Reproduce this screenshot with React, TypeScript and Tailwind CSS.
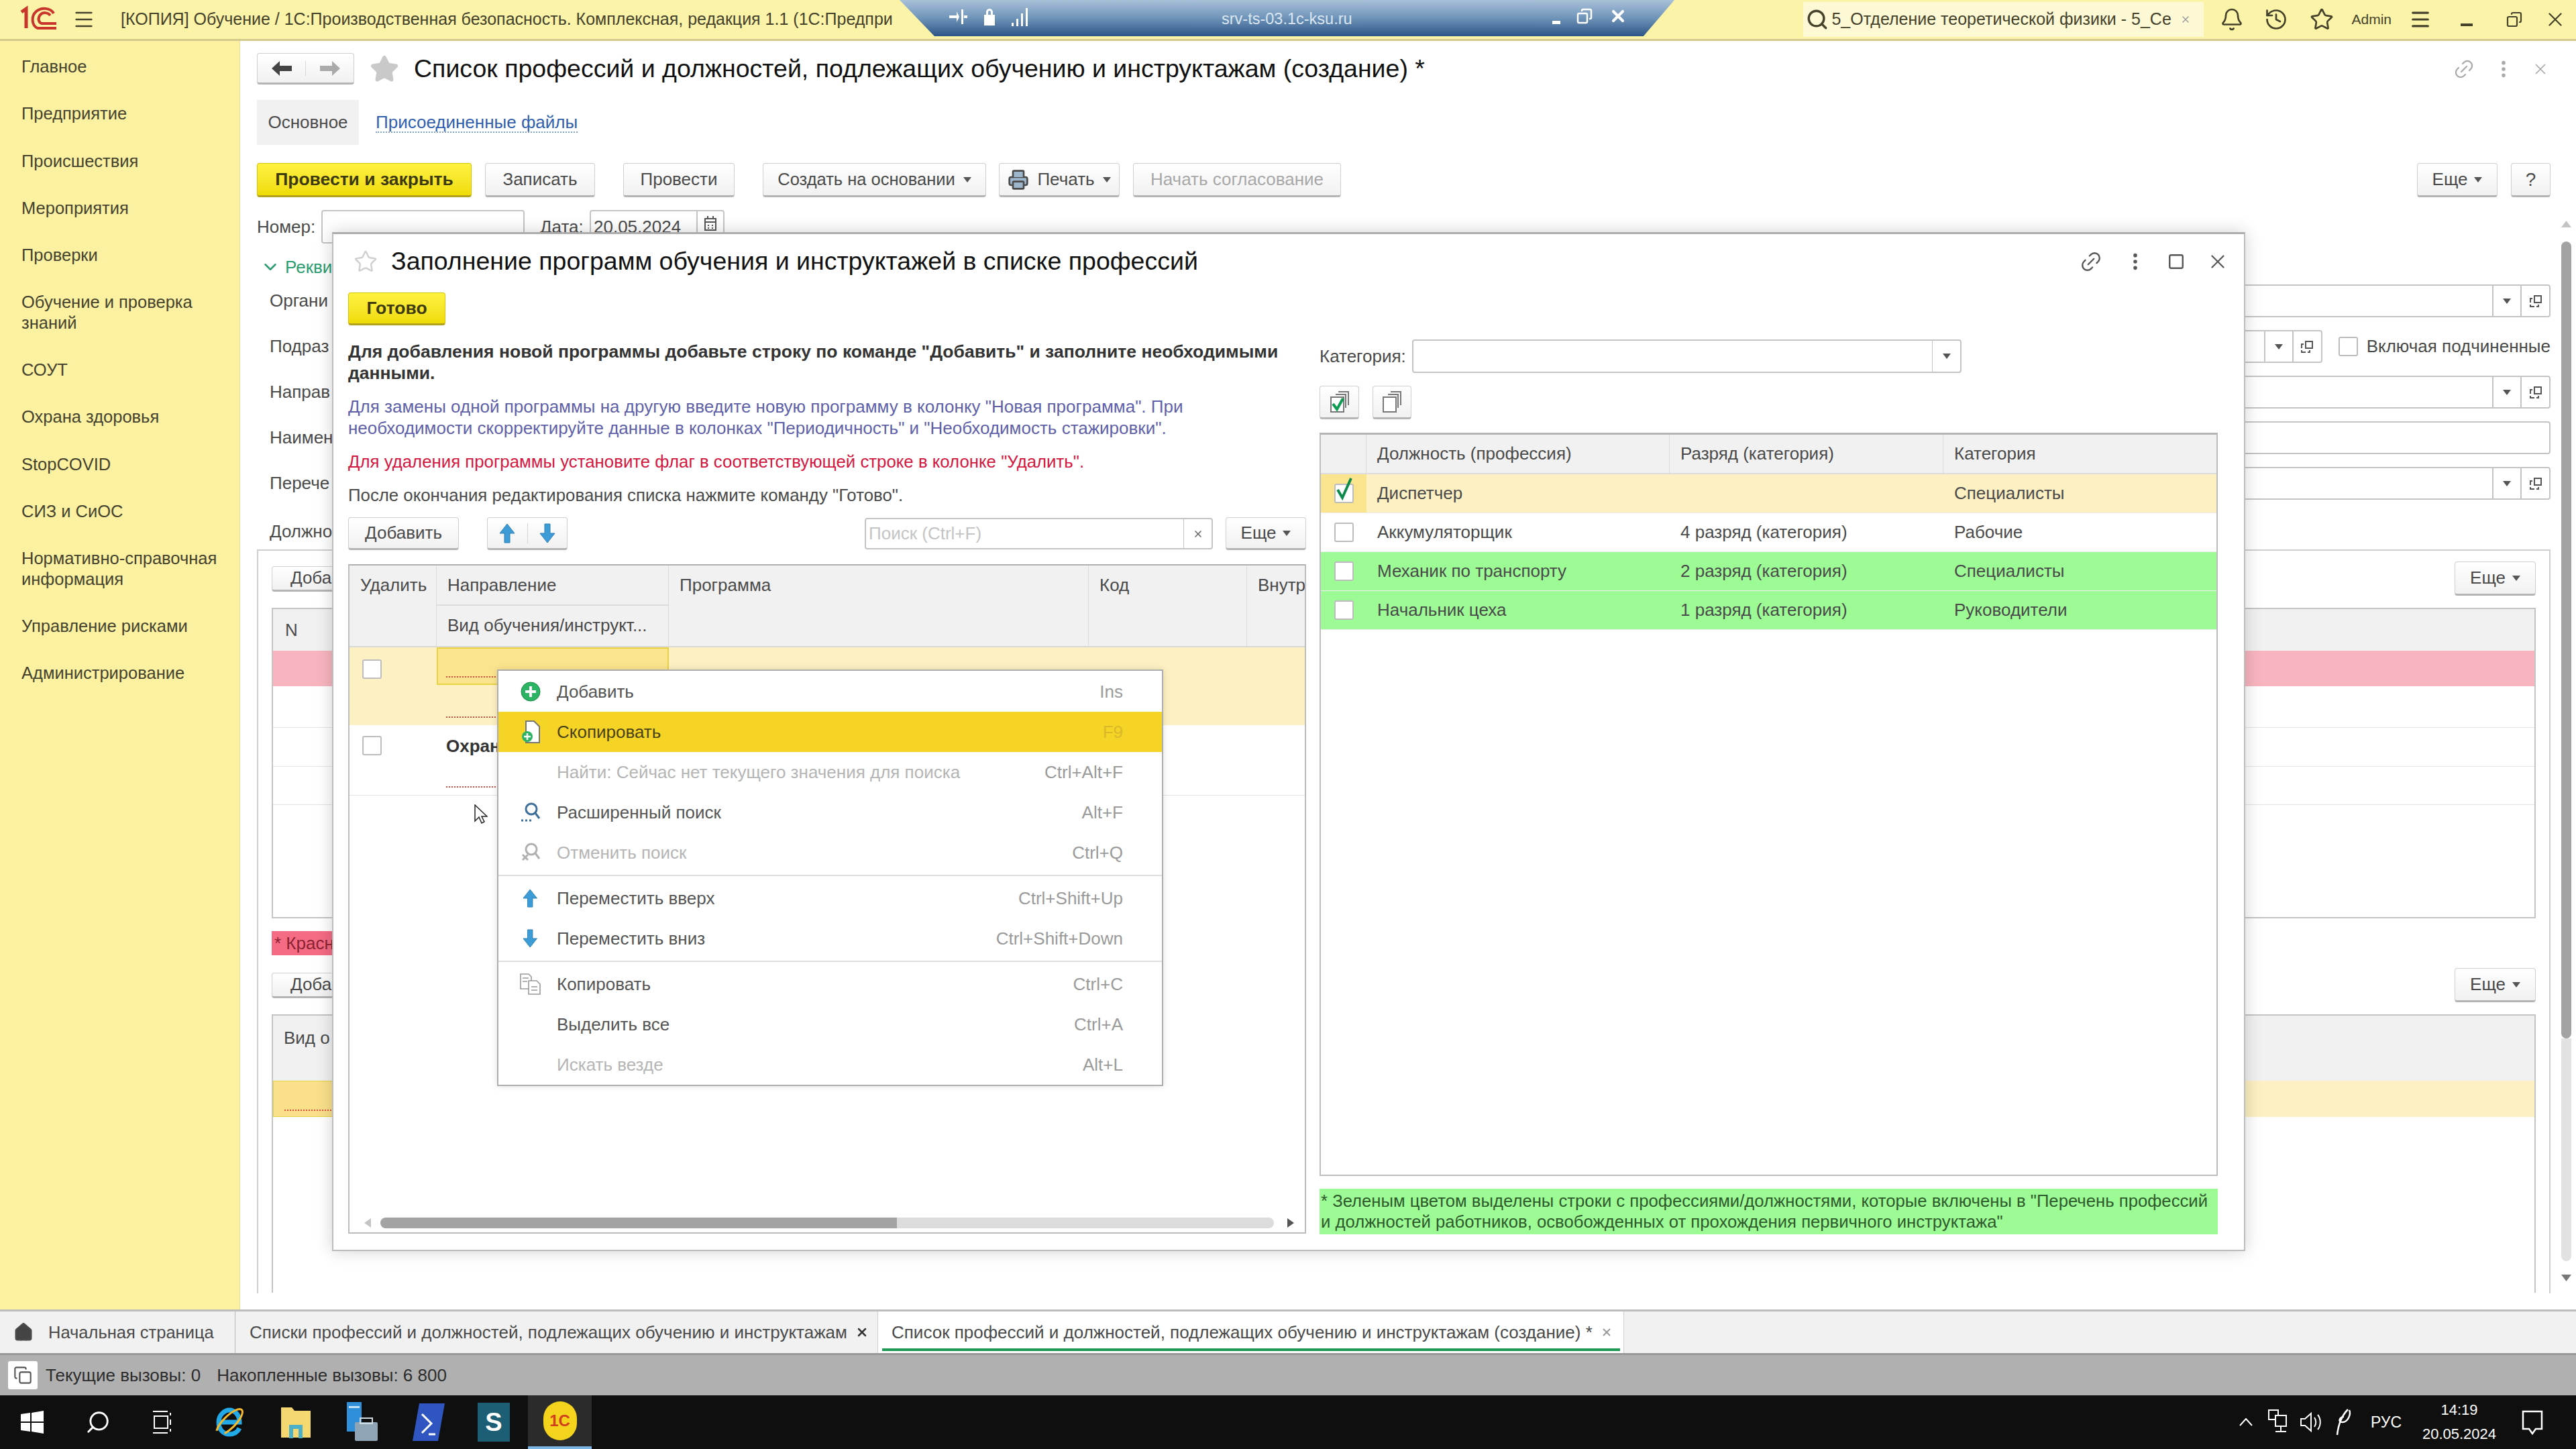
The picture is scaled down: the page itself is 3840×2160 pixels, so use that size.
import { Bell, ChevronDown, Copy, History, Home, Link2, Menu, MoreVertical, Printer, Search, Square, Star, X } from "lucide-react";

const btn =
  "flex items-center justify-center rounded-[4px] border border-[#cfcfcf] border-b-[3px] border-b-[#b5b5b5] bg-gradient-to-b from-white to-[#f1f1f1] text-[#4a4a4a]";
const yellowBtn =
  "flex items-center justify-center rounded-[4px] border border-[#d9c400] border-b-[3px] border-b-[#b3a21e] bg-gradient-to-b from-[#fff33f] to-[#f0db00] text-[26.5px] font-bold text-[#3d3a10]";
const inputBox = "flex rounded-[4px] border-2 border-[#c4c4c4] bg-white";
// labels of the back form stop where the dialog starts (x=495), the picture only shows that much of them
const shownLabel = "w-[93px] shrink-0 whitespace-nowrap";

const Caret = ({ className = "fill-[#555]" }: { className?: string }) => (
  <svg width="12" height="8" viewBox="0 0 12 8" className={className}>
    <polygon points="0,0 12,0 6,8" />
  </svg>
);

const OpenIcon = () => (
  <svg width="20" height="20" viewBox="0 0 20 20" fill="none" stroke="#555" strokeWidth="2">
    <rect x="8" y="2" width="10" height="10" />
    <path d="M5 6H2v12h12v-3" strokeDasharray="9 3" />
  </svg>
);

const Arrow = ({ down = false, size = 30 }: { down?: boolean; size?: number }) => (
  <svg width={size * 0.8} height={size} viewBox="0 0 24 30" className={down ? "rotate-180" : ""}>
    <polygon points="12,1 23,15 16,15 16,29 8,29 8,15 1,15" fill="#3d9bd6" stroke="#2b7fb5" strokeWidth="1" />
  </svg>
);

const Checkbox = ({ checked = false, className = "" }: { checked?: boolean; className?: string }) => (
  <div className={`relative h-[29px] w-[29px] rounded-[3px] border-2 border-[#bdbdbd] bg-white ${className}`}>
    {checked && (
      <svg width="30" height="38" viewBox="0 0 30 38" className="absolute left-[-2px] top-[-13px]">
        <path d="M5 20 L12 32 L25 3" fill="none" stroke="#0b8a4c" strokeWidth="4" />
      </svg>
    )}
  </div>
);

function Logo() {
  return (
    <svg width="58" height="42" viewBox="0 0 58 42" fill="none" stroke="#c9352c">
      <path d="M4 10 L11 5 V34" strokeWidth="5" />
      <path d="M52 12 C48 4 34 2 26 9 C18 16 19 30 28 34 H56" strokeWidth="4" />
      <path d="M47 15 C43 10 36 10 32 14 C28 19 29 25 34 27 H56" strokeWidth="4" />
    </svg>
  );
}

function TopBar() {
  return (
    <header className="flex h-[61px] shrink-0 items-center border-b-[3px] border-b-[#d3c98a] bg-[#fbf3a8] text-[#45422c]">
      <div className="ml-[28px] w-[58px]">
        <Logo />
      </div>
      <Menu className="ml-[22px] h-[34px] w-[34px]" strokeWidth={1.8} />
      <div className="ml-[38px] w-[1230px] whitespace-nowrap text-[25px]">
        [КОПИЯ] Обучение / 1С:Производственная безопасность. Комплексная, редакция 1.1 (1С:Предпри
      </div>
      <div className="ml-auto flex h-[52px] w-[597px] items-center bg-[#fdf9d4] pl-[4px]">
        <Search className="h-[34px] w-[34px]" strokeWidth={2.4} />
        <div className="ml-[4px] w-[506px] whitespace-nowrap text-[25px]">5_Отделение теоретической физики - 5_Се</div>
        <X className="ml-[14px] h-[16px] w-[16px] text-[#999]" strokeWidth={2} />
      </div>
      <Bell className="ml-[24px] h-[36px] w-[36px]" strokeWidth={1.8} />
      <History className="ml-[30px] h-[36px] w-[36px]" strokeWidth={1.8} />
      <Star className="ml-[32px] h-[36px] w-[36px]" strokeWidth={1.8} />
      <div className="ml-[26px] text-[21px]">Admin</div>
      <Menu className="ml-[26px] h-[34px] w-[34px]" strokeWidth={2.2} />
      <div className="ml-[43px] mt-[16px] h-[4px] w-[18px] bg-[#45422c]" />
      <Copy className="ml-[50px] h-[24px] w-[24px] -scale-x-100" strokeWidth={2.2} />
      <X className="ml-[32px] mr-[14px] h-[34px] w-[34px]" strokeWidth={1.6} />
    </header>
  );
}

function RemoteBar() {
  return (
    <div className="absolute left-[1341px] top-0 flex h-[54px] w-[1155px] items-center bg-gradient-to-b from-[#a9c0d8] via-[#6f94b9] to-[#2d5586] [clip-path:polygon(0_0,100%_0,96%_100%,4.5%_100%)]">
      <div className="absolute left-[72px] top-[10px] flex items-center gap-[22px] text-white">
        <svg width="30" height="26" viewBox="0 0 30 26" fill="white">
          <path d="M2 11h11v-6l4 8-4 8v-6H2zM20 2h3v22h-3zM24 11h5v4h-5z" />
        </svg>
        <svg width="20" height="30" viewBox="0 0 20 30" fill="white">
          <path d="M2 12h3V8a5 5 0 0 1 10 0v4h3v16H2zM8 12h4V8a2 2 0 0 0-4 0z" />
        </svg>
        <svg width="26" height="30" viewBox="0 0 26 30" fill="white">
          <path d="M1 24h3v5H1zM8 18h3v11H8zM15 10h3v19h-3zM22 2h3v27h-3z" />
        </svg>
      </div>
      <div className="absolute left-[480px] top-[11px] text-[23.5px] text-[#dbe6f1]">srv-ts-03.1c-ksu.ru</div>
      <div className="absolute left-[973px] top-[10px] flex items-center gap-[24px] text-white">
        <div className="mt-[18px] h-[5px] w-[12px] bg-white" />
        <Copy className="h-[24px] w-[24px] -scale-x-100" strokeWidth={2.5} />
        <X className="h-[28px] w-[28px]" strokeWidth={3.5} />
      </div>
    </div>
  );
}

const navItems = [
  "Главное",
  "Предприятие",
  "Происшествия",
  "Мероприятия",
  "Проверки",
  "Обучение и проверка знаний",
  "СОУТ",
  "Охрана здоровья",
  "StopCOVID",
  "СИЗ и СиОС",
  "Нормативно-справочная информация",
  "Управление рисками",
  "Администрирование",
];

function Sidebar() {
  return (
    <aside className="w-[358px] shrink-0 border-r border-r-[#e9e0a0] bg-[#fbf1a0] pt-[3px] text-[25.5px] leading-[30.3px] text-[#45432f]">
      {navItems.map((item) => (
        <div key={item} className="py-[20px] pl-[32px] pr-[20px]">
          {item}
        </div>
      ))}
    </aside>
  );
}

function SplitControls() {
  return (
    <>
      <div className="flex-1" />
      <div className="flex w-[42px] items-center justify-center border-l-2 border-l-[#c4c4c4]">
        <Caret />
      </div>
      <div className="flex w-[43px] items-center justify-center border-l-2 border-l-[#c4c4c4]">
        <OpenIcon />
      </div>
    </>
  );
}

function BackForm() {
  return (
    <div className="flex min-w-0 flex-1 flex-col overflow-hidden pl-[25px] text-[26px] text-[#4a4a4a]">
      <div className="mt-[18px] flex h-[47px] items-center">
        <div className={`${btn} h-[47px] w-[145px]`}>
          <div className="flex flex-1 justify-center text-[#444]">
            <svg width="30" height="22" viewBox="0 0 30 22" fill="currentColor">
              <polygon points="0,11 12,0 12,7 30,7 30,15 12,15 12,22" />
            </svg>
          </div>
          <div className="flex flex-1 justify-center border-l border-l-[#d8d8d8] text-[#aaa]">
            <svg width="30" height="22" viewBox="0 0 30 22" fill="currentColor">
              <polygon points="30,11 18,0 18,7 0,7 0,15 18,15 18,22" />
            </svg>
          </div>
        </div>
        <Star className="ml-[23px] h-[44px] w-[44px] fill-[#c9c9c9] text-[#c9c9c9]" />
        <h1 className="ml-[22px] whitespace-nowrap text-[37.5px] text-[#111]">
          Список профессий и должностей, подлежащих обучению и инструктажам (создание) *
        </h1>
        <div className="ml-auto mr-[2px] flex items-center gap-[26px] text-[#a9a9a9]">
          <Link2 className="h-[34px] w-[34px] -rotate-45" strokeWidth={1.6} />
          <MoreVertical className="h-[32px] w-[32px]" strokeWidth={2.2} />
          <X className="h-[26px] w-[26px]" strokeWidth={1.6} />
        </div>
      </div>

      <div className="mt-[23px] flex h-[67px] items-center">
        <div className="flex h-full w-[152px] items-center justify-center bg-[#f1f1f1]">Основное</div>
        <div className="ml-[25px] border-b-2 border-dotted border-b-[#7f9fd0] leading-[28px] text-[#2f5fae]">
          Присоединенные файлы
        </div>
      </div>

      <div className="mt-[27px] flex h-[51px] items-center">
        <div className={`${yellowBtn} h-full w-[320px]`}>Провести и закрыть</div>
        <div className={`${btn} ml-[20px] h-full w-[164px]`}>Записать</div>
        <div className={`${btn} ml-[42px] h-full w-[166px]`}>Провести</div>
        <div className={`${btn} ml-[42px] h-full w-[333px] gap-[12px] text-[25.5px]`}>
          Создать на основании <Caret />
        </div>
        <div className={`${btn} ml-[19px] h-full w-[180px] gap-[12px]`}>
          <Printer className="h-[32px] w-[32px] fill-[#9db6cc]" strokeWidth={2} />
          Печать <Caret />
        </div>
        <div className={`${btn} ml-[20px] h-full w-[310px] text-[#a8a8a8]`}>Начать согласование</div>
        <div className={`${btn} ml-auto h-full w-[120px] gap-[10px]`}>
          Еще <Caret />
        </div>
        <div className={`${btn} ml-[20px] h-full w-[59px] text-[28px]`}>?</div>
      </div>

      <div className="mt-[19px] flex h-[50px] items-center">
        <span className="w-[96px]">Номер:</span>
        <div className={`${inputBox} h-full w-[303px]`} />
        <span className="ml-[23px] w-[74px]">Дата:</span>
        <div className={`${inputBox} h-full w-[201px]`}>
          <div className="flex flex-1 items-center pl-[4px]">20.05.2024</div>
          <div className="flex w-[40px] justify-center border-l-2 border-l-[#c4c4c4] pt-[6px]">
            <svg width="20" height="24" viewBox="0 0 20 24" fill="none" stroke="#555" strokeWidth="2">
              <rect x="2" y="5" width="16" height="17" />
              <path d="M6 1v5M14 1v5M2 10h16M6 15h2M12 15h2M6 19h2M12 19h2" />
            </svg>
          </div>
        </div>
      </div>

      <div className="mt-[20px] flex h-[30px] items-center text-[#2a9d6f]">
        <ChevronDown className="ml-[5px] h-[30px] w-[30px]" strokeWidth={2} />
        <span className="ml-[7px] whitespace-nowrap">Рекви</span>
      </div>

      <div className="mt-[11px] flex flex-col gap-[19px] pl-[19px]">
        <div className="flex items-center">
          <span className={shownLabel}>Органи</span>
          <div className={`${inputBox} h-[49px] flex-1`}>
            <SplitControls />
          </div>
        </div>
        <div className="flex items-center">
          <span className={shownLabel}>Подраз</span>
          <div className={`${inputBox} h-[49px] w-[2968px]`}>
            <SplitControls />
          </div>
          <Checkbox className="ml-[24px]" />
          <span className="ml-[13px] whitespace-nowrap">Включая подчиненные</span>
        </div>
        <div className="flex items-center">
          <span className={shownLabel}>Направ</span>
          <div className={`${inputBox} h-[49px] flex-1`}>
            <SplitControls />
          </div>
        </div>
        <div className="flex items-center">
          <span className={shownLabel}>Наимен</span>
          <div className={`${inputBox} h-[49px] flex-1`} />
        </div>
        <div className="flex items-center">
          <span className={shownLabel}>Перече</span>
          <div className={`${inputBox} h-[49px] flex-1`}>
            <SplitControls />
          </div>
        </div>
      </div>

      <div className="mt-[20px] flex h-[54px] items-center pl-[19px]">
        <span className={shownLabel}>Должно</span>
      </div>
      <div className="h-[1109px] border-x-2 border-t-2 border-[#cfcfcf] px-[20px] pt-[16px]">
        <div className="flex h-[51px] items-center">
          <div className={`${btn} h-[38px] w-[91px] justify-start rounded-r-none pl-[27px]`}>Доба</div>
          <div className={`${btn} ml-auto h-full w-[121px] gap-[10px]`}>
            Еще <Caret />
          </div>
        </div>
        <div className="mt-[18px] flex h-[463px] flex-col border-2 border-[#c4c4c4]">
          <div className="flex h-[62px] items-center bg-[#f1f1f1] pl-[18px]">N</div>
          <div className="h-[53px] bg-[#f8b5bf]" />
          <div className="h-[62px] border-b border-b-[#e4e4e4]" />
          <div className="h-[58px] border-b border-b-[#e4e4e4]" />
          <div className="h-[57px] border-b border-b-[#e4e4e4]" />
        </div>
        <div className="mt-[19px] flex h-[36px] w-[91px] items-center whitespace-nowrap bg-[#f56b84] pl-[4px] text-[#8b2232]">
          * Красн
        </div>
        <div className="mt-[19px] flex h-[51px] items-center">
          <div className={`${btn} h-[38px] w-[91px] justify-start rounded-r-none pl-[27px]`}>Доба</div>
          <div className={`${btn} ml-auto h-full w-[121px] gap-[10px]`}>
            Еще <Caret />
          </div>
        </div>
        <div className="mt-[18px] h-[415px] border-x-2 border-t-2 border-[#c4c4c4]">
          <div className="h-[97px] whitespace-nowrap bg-[#f1f1f1] pl-[16px] pt-[14px]">Вид о</div>
          <div className="flex h-[54px] bg-[#fdf0c2]">
            <div className="h-full w-[300px] border border-[#e6d33f] bg-[#fae08a] pl-[16px]">
              <div className="h-[44px] border-b-2 border-dotted border-b-[#e4483c]" />
            </div>
          </div>
        </div>
      </div>
    </div>
  );
}

function PageScroll() {
  return (
    <div className="flex w-[38px] shrink-0 flex-col pl-[16px] pt-[268px]">
      <svg width="15" height="10" viewBox="0 0 15 10" className="fill-[#c4c4c4]">
        <polygon points="7.5,0 15,10 0,10" />
      </svg>
      <div className="mt-[21px] h-[1188px] w-[15px] rounded-full bg-[#a3a3a3]" />
      <div className="h-[332px] w-[15px] rounded-b-full bg-[#e2e2e2]" />
      <svg width="15" height="10" viewBox="0 0 15 10" className="mt-[20px] fill-[#777]">
        <polygon points="0,0 15,0 7.5,10" />
      </svg>
    </div>
  );
}

const profRows = [
  { name: "Диспетчер", rank: "", cat: "Специалисты", tone: "bg-[#fdf0c2]", checked: true },
  { name: "Аккумуляторщик", rank: "4 разряд (категория)", cat: "Рабочие", tone: "bg-white", checked: false },
  { name: "Механик по транспорту", rank: "2 разряд (категория)", cat: "Специалисты", tone: "bg-[#9dfb96]", checked: false },
  { name: "Начальник цеха", rank: "1 разряд (категория)", cat: "Руководители", tone: "bg-[#9dfb96]", checked: false },
];

function LeftPane() {
  return (
    <div className="w-[1428px] shrink-0 pt-[8px]">
      <p className="text-[26.5px] font-bold leading-[32px] text-[#333]">
        Для добавления новой программы добавьте строку по команде "Добавить" и заполните необходимыми данными.
      </p>
      <p className="mt-[18px] leading-[32px] text-[#5f61a8]">
        Для замены одной программы на другую введите новую программу в колонку "Новая программа". При необходимости
        скорректируйте данные в колонках "Периодичность" и "Необходимость стажировки".
      </p>
      <p className="mt-[18px] text-[25.8px] leading-[32px] text-[#d4173f]">
        Для удаления программы установите флаг в соответствующей строке в колонке "Удалить".
      </p>
      <p className="mt-[18px] text-[25.8px] leading-[32px]">После окончания редактирования списка нажмите команду "Готово".</p>

      <div className="mt-[17px] flex h-[49px] items-center">
        <div className={`${btn} h-full w-[165px]`}>Добавить</div>
        <div className={`${btn} ml-[42px] h-full w-[120px]`}>
          <div className="flex flex-1 justify-center">
            <Arrow />
          </div>
          <div className="flex flex-1 justify-center border-l border-l-[#d5d5d5]">
            <Arrow down />
          </div>
        </div>
        <div className={`${inputBox} ml-auto h-[47px] w-[519px]`}>
          <div className="flex flex-1 items-center pl-[4px] text-[#c4c4c4]">Поиск (Ctrl+F)</div>
          <div className="flex w-[42px] items-center justify-center border-l border-l-[#c4c4c4]">
            <X className="h-[16px] w-[16px] text-[#666]" strokeWidth={2.5} />
          </div>
        </div>
        <div className={`${btn} ml-[19px] h-full w-[120px] gap-[10px]`}>
          Еще <Caret />
        </div>
      </div>

      <div className="mt-[21px] flex h-[998px] flex-col overflow-hidden border-2 border-[#bdbdbd] border-t-[#b0b0b0]">
        <div className="flex h-[122px] shrink-0 border-b-2 border-b-[#d8d8d8] bg-[#f1f1f1]">
          <div className="w-[130px] shrink-0 border-r border-r-[#dcdcdc] pl-[16px] pt-[10px]">Удалить</div>
          <div className="w-[346px] shrink-0 border-r border-r-[#dcdcdc]">
            <div className="h-[60px] border-b-2 border-b-[#dcdcdc] pl-[16px] pt-[10px]">Направление</div>
            <div className="pl-[16px] pt-[10px]">Вид обучения/инструкт...</div>
          </div>
          <div className="w-[626px] shrink-0 border-r border-r-[#dcdcdc] pl-[16px] pt-[10px]">Программа</div>
          <div className="w-[236px] shrink-0 border-r border-r-[#dcdcdc] pl-[16px] pt-[10px]">Код</div>
          <div className="whitespace-nowrap pl-[16px] pt-[10px]">Внутр</div>
        </div>
        <div className="flex h-[116px] shrink-0 bg-[#fdf0c2]">
          <div className="w-[130px] shrink-0 pl-[19px] pt-[18px]">
            <Checkbox />
          </div>
          <div className="w-[346px] shrink-0">
            <div className="h-[56px] border-2 border-[#e6d33f] bg-[#fae48e] px-[12px]">
              <div className="h-[43px] border-b-2 border-dotted border-b-[#e4483c]" />
            </div>
            <div className="mx-[14px] h-[49px] border-b-2 border-dotted border-b-[#e4483c]" />
          </div>
        </div>
        <div className="flex h-[105px] shrink-0 border-b border-b-[#e2e2e2]">
          <div className="w-[130px] shrink-0 pl-[19px] pt-[16px]">
            <Checkbox />
          </div>
          <div className="w-[346px] shrink-0 px-[14px] pt-[12px]">
            <div className="h-[81px] w-[74px] whitespace-nowrap border-b-2 border-dotted border-b-[#e4483c] font-bold text-[#333]">
              Охран
            </div>
          </div>
        </div>
        <div className="flex-1" />
        <div className="flex h-[22px] shrink-0 items-start pl-[22px]">
          <svg width="10" height="14" viewBox="0 0 10 14" className="mt-[1px] fill-[#c4c4c4]">
            <polygon points="10,0 10,14 0,7" />
          </svg>
          <div className="ml-[14px] h-[16px] w-[770px] rounded-l-full bg-[#a3a3a3]" />
          <div className="h-[16px] w-[562px] rounded-r-full bg-[#dcdcdc]" />
          <svg width="10" height="14" viewBox="0 0 10 14" className="ml-[20px] mt-[1px] fill-[#555]">
            <polygon points="0,0 0,14 10,7" />
          </svg>
        </div>
      </div>
    </div>
  );
}

function RightPane() {
  return (
    <div className="ml-[20px] w-[1339px] shrink-0 pt-[6px]">
      <div className="flex h-[50px] items-center">
        <span className="w-[138px]">Категория:</span>
        <div className={`${inputBox} h-full w-[819px]`}>
          <div className="flex-1" />
          <div className="flex w-[42px] items-center justify-center border-l border-l-[#c4c4c4]">
            <Caret />
          </div>
        </div>
      </div>
      <div className="mt-[19px] flex h-[50px] gap-[20px]">
        <div className={`${btn} h-full w-[59px]`}>
          <svg width="32" height="34" viewBox="0 0 32 34" fill="none">
            <path d="M14 2h15v20M10 6h15v20" stroke="#777" strokeWidth="2" />
            <rect x="3" y="10" width="19" height="22" fill="#fff" stroke="#777" strokeWidth="2" />
            <path d="M6 20l6 8 9-16" stroke="#0d9c52" strokeWidth="4" />
          </svg>
        </div>
        <div className={`${btn} h-full w-[58px]`}>
          <svg width="32" height="34" viewBox="0 0 32 34" fill="none" stroke="#777" strokeWidth="2">
            <path d="M14 2h15v20M10 6h15v20" />
            <rect x="3" y="10" width="19" height="22" fill="#fff" />
          </svg>
        </div>
      </div>
      <div className="mt-[20px] flex h-[1108px] flex-col border-2 border-[#bdbdbd] border-t-[3px] border-t-[#b4b4b4]">
        <div className="flex h-[59px] shrink-0 items-center border-b-2 border-b-[#dcdcdc] bg-[#f1f1f1]">
          <div className="h-full w-[68px] border-r border-r-[#dcdcdc]" />
          <div className="flex h-full w-[452px] items-center border-r border-r-[#dcdcdc] pl-[16px]">Должность (профессия)</div>
          <div className="flex h-full w-[408px] items-center border-r border-r-[#dcdcdc] pl-[16px]">Разряд (категория)</div>
          <div className="pl-[16px]">Категория</div>
        </div>
        {profRows.map((row) => (
          <div key={row.name} className={`flex h-[58px] shrink-0 items-center border-b border-b-[#ededed] ${row.tone}`}>
            <div className={`flex h-full w-[68px] items-center justify-center ${row.checked ? "bg-[#fae48e]" : ""}`}>
              <Checkbox checked={row.checked} />
            </div>
            <div className="w-[452px] pl-[16px]">{row.name}</div>
            <div className="w-[408px] pl-[16px]">{row.rank}</div>
            <div className="pl-[16px]">{row.cat}</div>
          </div>
        ))}
      </div>
      <div className="mt-[19px] flex h-[68px] items-center whitespace-nowrap bg-[#9dfb96] px-[2px] text-[25.7px] leading-[31px] text-[#2f5a2c]">
        <div>
          * Зеленым цветом выделены строки с профессиями/должностями, которые включены в "Перечень профессий
          <br />и должностей работников, освобожденных от прохождения первичного инструктажа"
        </div>
      </div>
    </div>
  );
}

function FillDialog() {
  return (
    <section className="absolute left-[495px] top-[346px] h-[1519px] w-[2852px] border-2 border-[#bcbcbc] border-t-[3px] border-t-[#adadad] bg-white text-[26px] text-[#4a4a4a] shadow-[0_0_24px_rgba(0,0,0,0.18)]">
      <div className="flex h-[81px] items-center pl-[30px] pr-[22px]">
        <Star className="h-[36px] w-[36px] text-[#cfcfcf]" strokeWidth={1.6} />
        <h2 className="ml-[20px] whitespace-nowrap text-[37.5px] text-[#111]">
          Заполнение программ обучения и инструктажей в списке профессий
        </h2>
        <div className="ml-auto flex items-center gap-[32px] text-[#555]">
          <Link2 className="h-[36px] w-[36px] -rotate-45" strokeWidth={1.6} />
          <MoreVertical className="h-[32px] w-[32px]" strokeWidth={2.2} />
          <Square className="h-[26px] w-[26px]" strokeWidth={2.2} />
          <X className="h-[34px] w-[34px]" strokeWidth={1.6} />
        </div>
      </div>
      <div className="ml-[22px] mt-[6px] h-[49px]">
        <div className={`${yellowBtn} h-full w-[145px]`}>Готово</div>
      </div>
      <div className="ml-[22px] mt-[15px] flex">
        <LeftPane />
        <RightPane />
      </div>
    </section>
  );
}

type MenuRow = { label: string; key: string; off?: boolean; active?: boolean; icon?: React.ReactNode };

const SearchDots = ({ off = false }: { off?: boolean }) => (
  <svg width="32" height="32" viewBox="0 0 32 32" fill="none" stroke={off ? "#b0b0b0" : "#3d6f9a"} strokeWidth="3">
    <circle cx="17" cy="11" r="8" />
    <path d="M23 17l6 8" />
    {off ? <path d="M4 27l8-8M12 27l-8-8" /> : <path d="M2 28h3M8 28h3M14 28h3" />}
  </svg>
);

const plusIcon = (
  <svg width="30" height="30" viewBox="0 0 30 30">
    <circle cx="15" cy="15" r="14" fill="#2bb463" stroke="#13893f" />
    <path d="M15 7v16M7 15h16" stroke="#fff" strokeWidth="4" />
  </svg>
);

const docPlusIcon = (
  <svg width="30" height="34" viewBox="0 0 30 34">
    <path d="M8 1h12l8 8v24H8z" fill="#fff" stroke="#777" strokeWidth="2" />
    <circle cx="10" cy="24" r="8" fill="#2bb463" />
    <path d="M10 19v10M5 24h10" stroke="#fff" strokeWidth="2.5" />
  </svg>
);

const copyIcon = (
  <svg width="32" height="32" viewBox="0 0 32 32" fill="#fff" stroke="#999" strokeWidth="1.6">
    <path d="M1 1h12l4 4v18H1z" />
    <path d="M13 11h12l5 5v15H13z" />
    <path d="M4 7h9M4 12h7M17 20h9M17 25h9" />
  </svg>
);

const menuGroups: MenuRow[][] = [
  [
    { label: "Добавить", key: "Ins", icon: plusIcon },
    { label: "Скопировать", key: "F9", active: true, icon: docPlusIcon },
    { label: "Найти: Сейчас нет текущего значения для поиска", key: "Ctrl+Alt+F", off: true },
    { label: "Расширенный поиск", key: "Alt+F", icon: <SearchDots /> },
    { label: "Отменить поиск", key: "Ctrl+Q", off: true, icon: <SearchDots off /> },
  ],
  [
    { label: "Переместить вверх", key: "Ctrl+Shift+Up", icon: <Arrow size={28} /> },
    { label: "Переместить вниз", key: "Ctrl+Shift+Down", icon: <Arrow down size={28} /> },
  ],
  [
    { label: "Копировать", key: "Ctrl+C", icon: copyIcon },
    { label: "Выделить все", key: "Ctrl+A" },
    { label: "Искать везде", key: "Alt+L", off: true },
  ],
];

function ContextMenu() {
  return (
    <div className="absolute left-[741px] top-[998px] h-[621px] w-[993px] border-2 border-[#adadad] bg-white pt-[1px] text-[26px] shadow-[0_0_10px_rgba(0,0,0,0.12)]">
      {menuGroups.map((group, i) => (
        <div key={i} className={i > 0 ? "mt-[3px] border-t-2 border-t-[#dedede] pt-[3px]" : ""}>
          {group.map((row) => (
            <div
              key={row.label}
              className={`flex h-[60px] items-center ${row.active ? "bg-[#f6d426] text-[#4a4218]" : row.off ? "text-[#b5b5b5]" : "text-[#555]"}`}
            >
              <div className="flex w-[87px] shrink-0 justify-center pl-[8px]">{row.icon}</div>
              <span>{row.label}</span>
              <span className={`ml-auto pr-[58px] ${row.active ? "text-[#d9b92a]" : "text-[#9a9a9a]"}`}>{row.key}</span>
            </div>
          ))}
        </div>
      ))}
    </div>
  );
}

function TabBar() {
  return (
    <div className="flex h-[65px] shrink-0 border-t-[3px] border-t-[#bdbdbd] bg-[#f1f1f1] text-[26px] text-[#4a4a4a]">
      <div className="flex w-[351px] items-center border-r border-r-[#b8b8b8] pl-[20px]">
        <Home className="h-[30px] w-[30px] fill-[#444]" strokeWidth={2} />
        <span className="ml-[22px] text-[25.5px]">Начальная страница</span>
      </div>
      <div className="flex w-[957px] items-center pl-[21px]">
        <span className="whitespace-nowrap">Списки профессий и должностей, подлежащих обучению и инструктажам</span>
        <X className="ml-[12px] h-[20px] w-[20px] text-[#333]" strokeWidth={3} />
      </div>
      <div className="relative flex w-[1113px] items-center border-x border-x-[#cfcfcf] bg-white pl-[20px]">
        <span className="whitespace-nowrap">Список профессий и должностей, подлежащих обучению и инструктажам (создание) *</span>
        <X className="ml-[12px] h-[18px] w-[18px] text-[#999]" strokeWidth={2.5} />
        <div className="absolute bottom-[3px] left-[6px] right-[5px] h-[4px] bg-[#1f9a55]" />
      </div>
    </div>
  );
}

function StatusBar() {
  return (
    <div className="flex h-[63px] shrink-0 items-center border-t-[3px] border-t-[#999] bg-[#b0b0b0] pl-[12px] text-[26px] text-[#2d2d2d]">
      <div className="flex h-[42px] w-[44px] items-center justify-center rounded-[3px] bg-white">
        <Copy className="h-[28px] w-[28px] text-[#555]" strokeWidth={1.8} />
      </div>
      <span className="ml-[12px]">Текущие вызовы: 0</span>
      <span className="ml-[24px]">Накопленные вызовы: 6 800</span>
    </div>
  );
}

function Taskbar() {
  return (
    <footer className="flex h-[80px] shrink-0 items-center bg-[#0f0f0f] text-white">
      <svg width="34" height="34" viewBox="0 0 34 34" fill="#fff" className="ml-[31px]">
        <path d="M0 5l14-2v13H0zM16 3l18-3v16H16zM0 18h14v13L0 29zM16 18h18v16l-18-3z" />
      </svg>
      <Search className="ml-[62px] h-[38px] w-[38px] -scale-x-100" strokeWidth={1.8} />
      <svg width="32" height="40" viewBox="0 0 32 40" fill="none" stroke="#fff" strokeWidth="2" className="ml-[60px]">
        <rect x="5" y="11" width="20" height="18" />
        <path d="M3 4h22M3 36h22M29 6v4M29 16v8M29 30v4" />
      </svg>
      <svg width="50" height="60" viewBox="0 0 50 60" fill="none" className="ml-[60px]">
        <path d="M12 30h28C40 18 32 12 25 12S9 19 9 30s7 18 16 18c7 0 12-3 15-9" stroke="#21a9e8" strokeWidth="7" />
        <ellipse cx="25" cy="30" rx="26" ry="9" transform="rotate(-45 25 30)" stroke="#f3b92a" strokeWidth="3" strokeDasharray="46 18 60 30" />
      </svg>
      <svg width="48" height="52" viewBox="0 0 48 52" className="ml-[50px]">
        <path d="M2 4h16l4 5h24v40H2z" fill="#f6d870" />
        <path d="M14 50V30h20v20h-6V36h-8v14z" fill="#4bb0c8" />
      </svg>
      <svg width="50" height="60" viewBox="0 0 50 60" className="ml-[50px]">
        <rect x="2" y="0" width="22" height="44" fill="#2f8fd8" />
        <rect x="5" y="6" width="16" height="3" fill="#bfe2fa" />
        <rect x="14" y="30" width="34" height="28" rx="2" fill="#8fa4b4" />
        <rect x="22" y="24" width="18" height="8" fill="none" stroke="#cfd9e0" strokeWidth="2" />
      </svg>
      <svg width="48" height="56" viewBox="0 0 48 56" className="ml-[50px]">
        <polygon points="10,0 48,0 38,56 0,56" fill="#2f55c0" />
        <path d="M14 16l14 14-14 14M24 46h10" fill="none" stroke="#fff" strokeWidth="3" />
      </svg>
      <div className="ml-[49px] flex h-[58px] w-[48px] items-center justify-center bg-[#1c5e73] text-[38px] font-bold leading-none text-white">
        S
      </div>
      <div className="ml-[27px] flex h-[80px] w-[95px] items-center justify-center border-b-[4px] border-b-[#79b6e6] bg-[#2b2b2b]">
        <div className="flex h-[58px] w-[50px] items-center justify-center rounded-full bg-[#f4d31c] text-[24px] font-bold text-[#d2401e]">
          1С
        </div>
      </div>
      <div className="ml-auto flex items-center">
        <svg width="20" height="12" viewBox="0 0 20 12" fill="none" stroke="#fff" strokeWidth="2">
          <path d="M1 11l9-10 9 10" />
        </svg>
        <svg width="32" height="40" viewBox="0 0 32 40" fill="none" stroke="#fff" strokeWidth="2" className="ml-[22px]">
          <rect x="2" y="2" width="14" height="14" />
          <rect x="12" y="10" width="16" height="16" fill="#0f0f0f" />
          <path d="M20 26v8M12 34h16" />
        </svg>
        <svg width="34" height="36" viewBox="0 0 34 36" fill="none" stroke="#fff" strokeWidth="2" className="ml-[16px]">
          <path d="M2 13h6l9-8v26l-9-8H2zM22 11c3 4 3 10 0 14M27 7c5 6 5 16 0 22" />
        </svg>
        <svg width="30" height="44" viewBox="0 0 30 44" fill="none" stroke="#fff" strokeWidth="2.5" className="ml-[18px]">
          <path d="M20 3c-8 8-14 20-16 38M22 4c3 6-2 18-10 18s-4-8 2-8" />
        </svg>
        <span className="ml-[24px] text-[23px]">РУС</span>
        <div className="ml-[26px] flex w-[120px] flex-col items-center text-[22px] leading-[36px]">
          <span>14:19</span>
          <span>20.05.2024</span>
        </div>
        <svg width="34" height="40" viewBox="0 0 34 40" fill="none" stroke="#fff" strokeWidth="2.5" className="ml-[32px] mr-[48px]">
          <path d="M3 4h28v26H22l-5 7-5-7H3z" />
        </svg>
      </div>
    </footer>
  );
}

export default function App() {
  return (
    <div className="relative flex h-[2160px] w-[3840px] flex-col overflow-hidden bg-white font-['Liberation_Sans',Arial,sans-serif]">
      <TopBar />
      <div className="flex min-h-0 flex-1">
        <Sidebar />
        <BackForm />
        <PageScroll />
      </div>
      <TabBar />
      <StatusBar />
      <Taskbar />
      <RemoteBar />
      <FillDialog />
      <ContextMenu />
      <svg width="20" height="30" viewBox="0 0 20 30" className="absolute left-[707px] top-[1199px]">
        <path d="M1 1v24l6-6 4 9 4-2-4-8h8z" fill="#fff" stroke="#222" strokeWidth="1.5" />
      </svg>
    </div>
  );
}
